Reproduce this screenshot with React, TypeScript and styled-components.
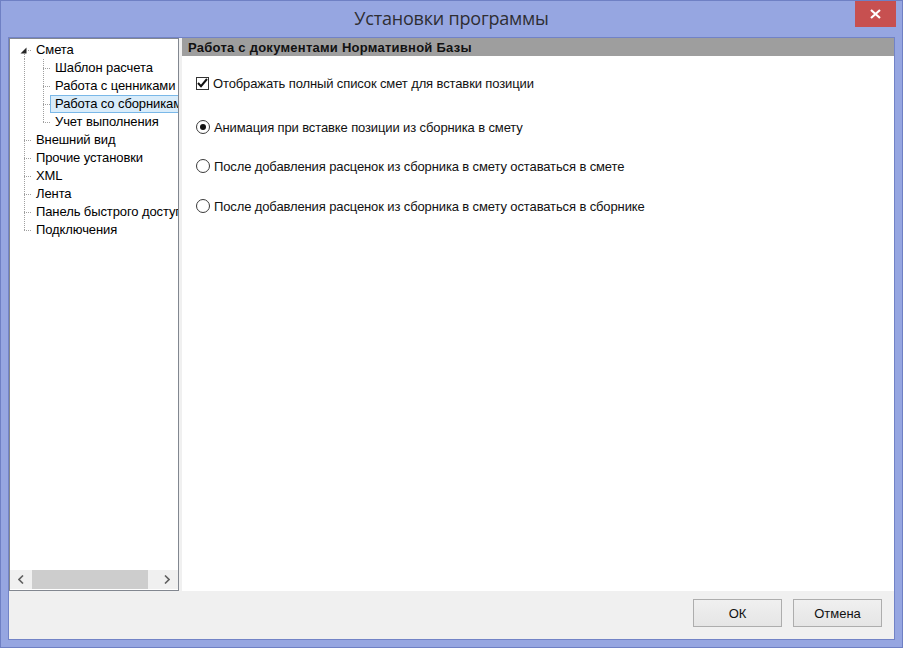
import { createGlobalStyle, styled } from "styled-components";

const GlobalStyle = createGlobalStyle`
  html, body {
    margin: 0;
    padding: 0;
    background: #ffffff;
  }
  body {
    font-family: "Liberation Sans", Arial, sans-serif;
    font-size: 13px;
    color: #000;
  }
  * {
    box-sizing: border-box;
  }
`;

const Window = styled.div`
  width: 903px;
  height: 648px;
  display: flex;
  flex-direction: column;
  background: #96a6e1;
  border: 1px solid #6f80c4;
`;

const TitleBar = styled.div`
  height: 36px;
  display: grid;
  grid-template-columns: 1fr auto 1fr;
  align-items: start;
`;

const Title = styled.div`
  grid-column: 2;
  margin-top: 5px;
  font-family: "Open Sans", "Noto Sans", sans-serif;
  font-size: 18px;
  color: #2e2e33;
  letter-spacing: -0.2px;
`;

const CloseButton = styled.button`
  grid-column: 3;
  justify-self: end;
  width: 41px;
  height: 26px;
  margin-right: 6px;
  border: 0;
  padding: 0;
  background: #c75050;
  display: flex;
  align-items: center;
  justify-content: center;
`;

const Client = styled.div`
  flex: 1;
  margin: 0 7px 7px 7px;
  border: 1px solid #7283c6;
  background: #f0f0f0;
  display: flex;
  flex-direction: column;
`;

const Main = styled.div`
  height: 553px;
  display: flex;
  gap: 3px;
`;

const TreePanel = styled.div`
  width: 170px;
  border: 1px solid #828790;
  background: #fff;
  display: flex;
  flex-direction: column;
`;

const TreeList = styled.div`
  flex: 1;
  overflow: hidden;
  padding: 2px 0 0 5px;
`;

const TreeRow = styled.div`
  height: 18px;
  display: flex;
  align-items: stretch;
  white-space: nowrap;
`;

const dots = (dir: "bottom" | "right") =>
  `repeating-linear-gradient(to ${dir}, #a0a0a0 0 1px, transparent 1px 2px)`;

const IndentCell = styled.div<{ $line: boolean }>`
  width: 19px;
  flex: none;
  position: relative;
  &::before {
    content: "";
    display: ${(p) => (p.$line ? "block" : "none")};
    position: absolute;
    left: 9px;
    top: 0;
    bottom: 0;
    width: 1px;
    background: ${dots("bottom")};
  }
`;

const ConnectorCell = styled.div<{ $top: boolean; $bottom: boolean; $expander?: boolean }>`
  width: 16px;
  flex: none;
  position: relative;
  &::before {
    content: "";
    position: absolute;
    left: 9px;
    width: 1px;
    top: ${(p) => (p.$top ? "0" : p.$expander ? "13px" : "9px")};
    bottom: ${(p) => (p.$bottom ? "0" : "9px")};
    background: ${dots("bottom")};
  }
  &::after {
    content: "";
    position: absolute;
    top: 9px;
    left: ${(p) => (p.$expander ? "13px" : "9px")};
    right: 0;
    height: 1px;
    background: ${dots("right")};
  }
`;

const Expander = styled.svg`
  position: absolute;
  left: 5px;
  top: 6px;
  z-index: 1;
`;

const Label = styled.div<{ $selected?: boolean }>`
  display: flex;
  align-items: center;
  padding: 0 3px 0 4px;
  border: 1px solid ${(p) => (p.$selected ? "#7ab8e8" : "transparent")};
  background: ${(p) => (p.$selected ? "#d9ecfa" : "transparent")};
  line-height: 16px;
  letter-spacing: -0.1px;
`;

const HScroll = styled.div`
  height: 19px;
  margin-bottom: 1px;
  display: flex;
  background: #f0f0f0;
`;

const ScrollArrow = styled.div`
  width: 22px;
  display: flex;
  align-items: center;
  justify-content: center;
`;

const ScrollTrack = styled.div`
  flex: 1;
  display: flex;
`;

const ScrollThumb = styled.div`
  width: 116px;
  background: #cdcdcd;
`;

const ContentPanel = styled.div`
  flex: 1;
  background: #fff;
  display: flex;
  flex-direction: column;
`;

const SectionHeader = styled.div`
  height: 18px;
  background: #9e9e9e;
  display: flex;
  align-items: center;
  padding-left: 6px;
  font-weight: bold;
  font-size: 13px;
  letter-spacing: 0.25px;
  color: #111;
`;

const Options = styled.div`
  display: flex;
  flex-direction: column;
  padding: 18px 0 0 14px;
`;

const OptionRow = styled.label<{ $space: number }>`
  height: 18px;
  margin-top: ${(p) => p.$space}px;
  display: flex;
  align-items: center;
  gap: 4px;
  color: #111;
  letter-spacing: -0.12px;
`;

const CheckBox = styled.span`
  width: 13px;
  height: 13px;
  border: 1px solid #333;
  background: #fff;
  display: flex;
  align-items: center;
  justify-content: center;
`;

const Radio = styled.span<{ $checked: boolean }>`
  width: 14px;
  height: 14px;
  border-radius: 50%;
  border: 1px solid #3a3a3a;
  background: #fff;
  display: flex;
  align-items: center;
  justify-content: center;
  &::after {
    content: "";
    display: ${(p) => (p.$checked ? "block" : "none")};
    width: 6px;
    height: 6px;
    border-radius: 50%;
    background: #111;
  }
`;

const Footer = styled.div`
  flex: 1;
  display: flex;
  justify-content: flex-end;
  align-items: flex-start;
  gap: 11px;
  padding: 8px 12px 0 0;
`;

const DialogButton = styled.button`
  width: 89px;
  height: 28px;
  border: 1px solid #adadad;
  background: linear-gradient(#f0f0f0, #e5e5e5);
  font-family: "Liberation Sans", Arial, sans-serif;
  font-size: 13px;
  color: #111;
  padding: 0;
`;

type Node = { label: string; children?: Node[]; selected?: boolean };

const tree: Node[] = [
  {
    label: "Смета",
    children: [
      { label: "Шаблон расчета" },
      { label: "Работа с ценниками" },
      { label: "Работа со сборниками", selected: true },
      { label: "Учет выполнения" },
    ],
  },
  { label: "Внешний вид" },
  { label: "Прочие установки" },
  { label: "XML" },
  { label: "Лента" },
  { label: "Панель быстрого доступа" },
  { label: "Подключения" },
];

function renderNodes(nodes: Node[], ancestors: boolean[]): JSX.Element[] {
  const rows: JSX.Element[] = [];
  nodes.forEach((n, i) => {
    const isFirstRoot = ancestors.length === 0 && i === 0;
    const hasNext = i < nodes.length - 1;
    const expander = !!n.children;
    rows.push(
      <TreeRow key={ancestors.length + "-" + n.label}>
        {ancestors.map((line, k) => (
          <IndentCell key={k} $line={line} />
        ))}
        <ConnectorCell $top={!isFirstRoot} $bottom={hasNext} $expander={expander}>
          {expander && (
            <Expander width="7" height="7" viewBox="0 0 7 7">
              <path d="M6.5 0.5 L6.5 6.5 L0.5 6.5 Z" fill="#262626" />
            </Expander>
          )}
        </ConnectorCell>
        <Label $selected={n.selected}>{n.label}</Label>
      </TreeRow>
    );
    if (n.children) rows.push(...renderNodes(n.children, [...ancestors, hasNext]));
  });
  return rows;
}

const options = [
  { kind: "check", label: "Отображать полный список смет для вставки позиции", checked: true, space: 0 },
  { kind: "radio", label: "Анимация при вставке позиции из сборника в смету", checked: true, space: 26 },
  { kind: "radio", label: "После добавления расценок из сборника в смету оставаться в смете", checked: false, space: 21 },
  { kind: "radio", label: "После добавления расценок из сборника в смету оставаться в сборнике", checked: false, space: 22 },
];

export default function App() {
  return (
    <>
      <GlobalStyle />
      <Window>
        <TitleBar>
          <Title>Установки программы</Title>
          <CloseButton aria-label="close">
            <svg width="11" height="10" viewBox="0 0 11 10">
              <path d="M1 1 L10 9 M10 1 L1 9" stroke="#fff" strokeWidth="2.2" />
            </svg>
          </CloseButton>
        </TitleBar>
        <Client>
          <Main>
            <TreePanel>
              <TreeList>{renderNodes(tree, [])}</TreeList>
              <HScroll>
                <ScrollArrow>
                  <svg width="6" height="9" viewBox="0 0 6 9">
                    <path d="M5 0.5 L1 4.5 L5 8.5" stroke="#606060" strokeWidth="1.6" fill="none" />
                  </svg>
                </ScrollArrow>
                <ScrollTrack>
                  <ScrollThumb />
                </ScrollTrack>
                <ScrollArrow>
                  <svg width="6" height="9" viewBox="0 0 6 9">
                    <path d="M1 0.5 L5 4.5 L1 8.5" stroke="#606060" strokeWidth="1.6" fill="none" />
                  </svg>
                </ScrollArrow>
              </HScroll>
            </TreePanel>
            <ContentPanel>
              <SectionHeader>Работа с документами Нормативной Базы</SectionHeader>
              <Options>
                {options.map((o) => (
                  <OptionRow key={o.label} $space={o.space}>
                    {o.kind === "check" ? (
                      <CheckBox>
                        <svg width="11" height="10" viewBox="0 0 11 10">
                          <path d="M1 5 L4 8.2 L10 1" stroke="#111" strokeWidth="2" fill="none" />
                        </svg>
                      </CheckBox>
                    ) : (
                      <Radio $checked={o.checked} />
                    )}
                    <span>{o.label}</span>
                  </OptionRow>
                ))}
              </Options>
            </ContentPanel>
          </Main>
          <Footer>
            <DialogButton>ОК</DialogButton>
            <DialogButton>Отмена</DialogButton>
          </Footer>
        </Client>
      </Window>
    </>
  );
}
